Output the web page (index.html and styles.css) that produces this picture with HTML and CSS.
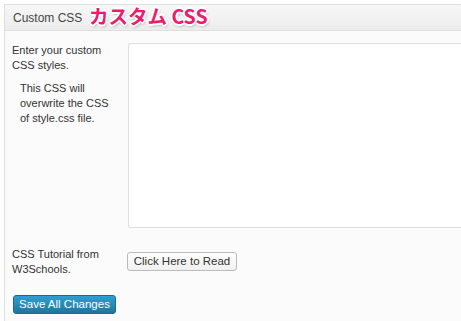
FILE: index.html
```html
<!DOCTYPE html>
<html>
<head>
<meta charset="utf-8">
<link rel="stylesheet" href="styles.css">
</head>
<body>
<div class="page">
  <div class="panel">
    <div class="panel-head">
      <span class="panel-title">Custom CSS</span>
      <span class="jp-label">カスタム CSS</span>
    </div>
    <div class="panel-body">
      <div class="row row-css">
        <div class="label">
          <p>Enter your custom CSS styles.</p>
          <p class="note">This CSS will overwrite the CSS of style.css file.</p>
        </div>
        <textarea class="css-input"></textarea>
      </div>
      <div class="row row-tutorial">
        <div class="label">
          <p>CSS Tutorial from W3Schools.</p>
        </div>
        <div class="field">
          <button class="btn">Click Here to Read</button>
        </div>
      </div>
      <div class="actions">
        <button class="btn-primary">Save All Changes</button>
      </div>
    </div>
  </div>
</div>
</body>
</html>
```

FILE: styles.css
```css
html, body {
  margin: 0;
  padding: 0;
  background: #ffffff;
  overflow: hidden;
}
.page {
  padding: 4px 0 0 4px;
  height: 317px;
  overflow: hidden;
  font-family: "Liberation Sans", Arial, sans-serif;
  color: #333;
}
.panel {
  border: 1px solid #dfdfdf;
  border-right: none;
  border-bottom: none;
  background: #fbfbfb;
  height: 330px;
}
.panel-head {
  position: relative;
  height: 25px;
  border-bottom: 1px solid #dfdfdf;
  background: linear-gradient(to bottom, #f7f7f7, #ececec);
  display: flex;
  align-items: center;
  padding-left: 8px;
}
.panel-title {
  font-size: 12px;
  color: #464646;
  padding-top: 1px;
}
.jp-label {
  position: absolute;
  left: 84px;
  top: -4px;
  font-family: "Noto Sans CJK JP", sans-serif;
  font-weight: 700;
  font-size: 19.5px;
  color: #ee1a6c;
  text-shadow:
    -1px -1px 0 #fff, 1px -1px 0 #fff, -1px 1px 0 #fff, 1px 1px 0 #fff,
    0 -2px 0 #fff, 0 2px 0 #fff, -2px 0 0 #fff, 2px 0 0 #fff,
    1px 2px 3px rgba(0,0,0,0.35);
}
.panel-body {
  padding: 12px 0 0 7px;
}
.row {
  display: grid;
  grid-template-columns: 116px 1fr;
}
.label {
  font-size: 11px;
  line-height: 15px;
  color: #333;
}
.label p {
  margin: 0;
  width: 100px;
}
.note {
  margin-top: 8px !important;
  padding-left: 8px;
}
.css-input {
  display: block;
  width: 340px;
  height: 183px;
  margin: 0;
  padding: 0;
  border: 1px solid #dfdfdf;
  border-right: none;
  border-radius: 3px 0 0 3px;
  background: #fff;
  resize: none;
}
.row-tutorial {
  margin-top: 19px;
}
.row-tutorial .field {
  padding-top: 4px;
}
.btn {
  height: 19px;
  width: 110px;
  padding: 0;
  margin-left: -1px;
  white-space: nowrap;
  font-family: "Liberation Sans", Arial, sans-serif;
  font-size: 11.5px;
  color: #333;
  border: 1px solid #bbb;
  border-radius: 3px;
  background: linear-gradient(to bottom, #fefefe, #f0f0f0);
}
.actions {
  margin-top: 17px;
}
.btn-primary {
  width: 103px;
  height: 19px;
  margin-left: 1px;
  padding: 0;
  white-space: nowrap;
  font-family: "Liberation Sans", Arial, sans-serif;
  font-size: 11.5px;
  color: #fff;
  border: 1px solid #1e6a8d;
  border-radius: 3px;
  background: linear-gradient(to bottom, #2e9fd2, #21759b);
}
```
